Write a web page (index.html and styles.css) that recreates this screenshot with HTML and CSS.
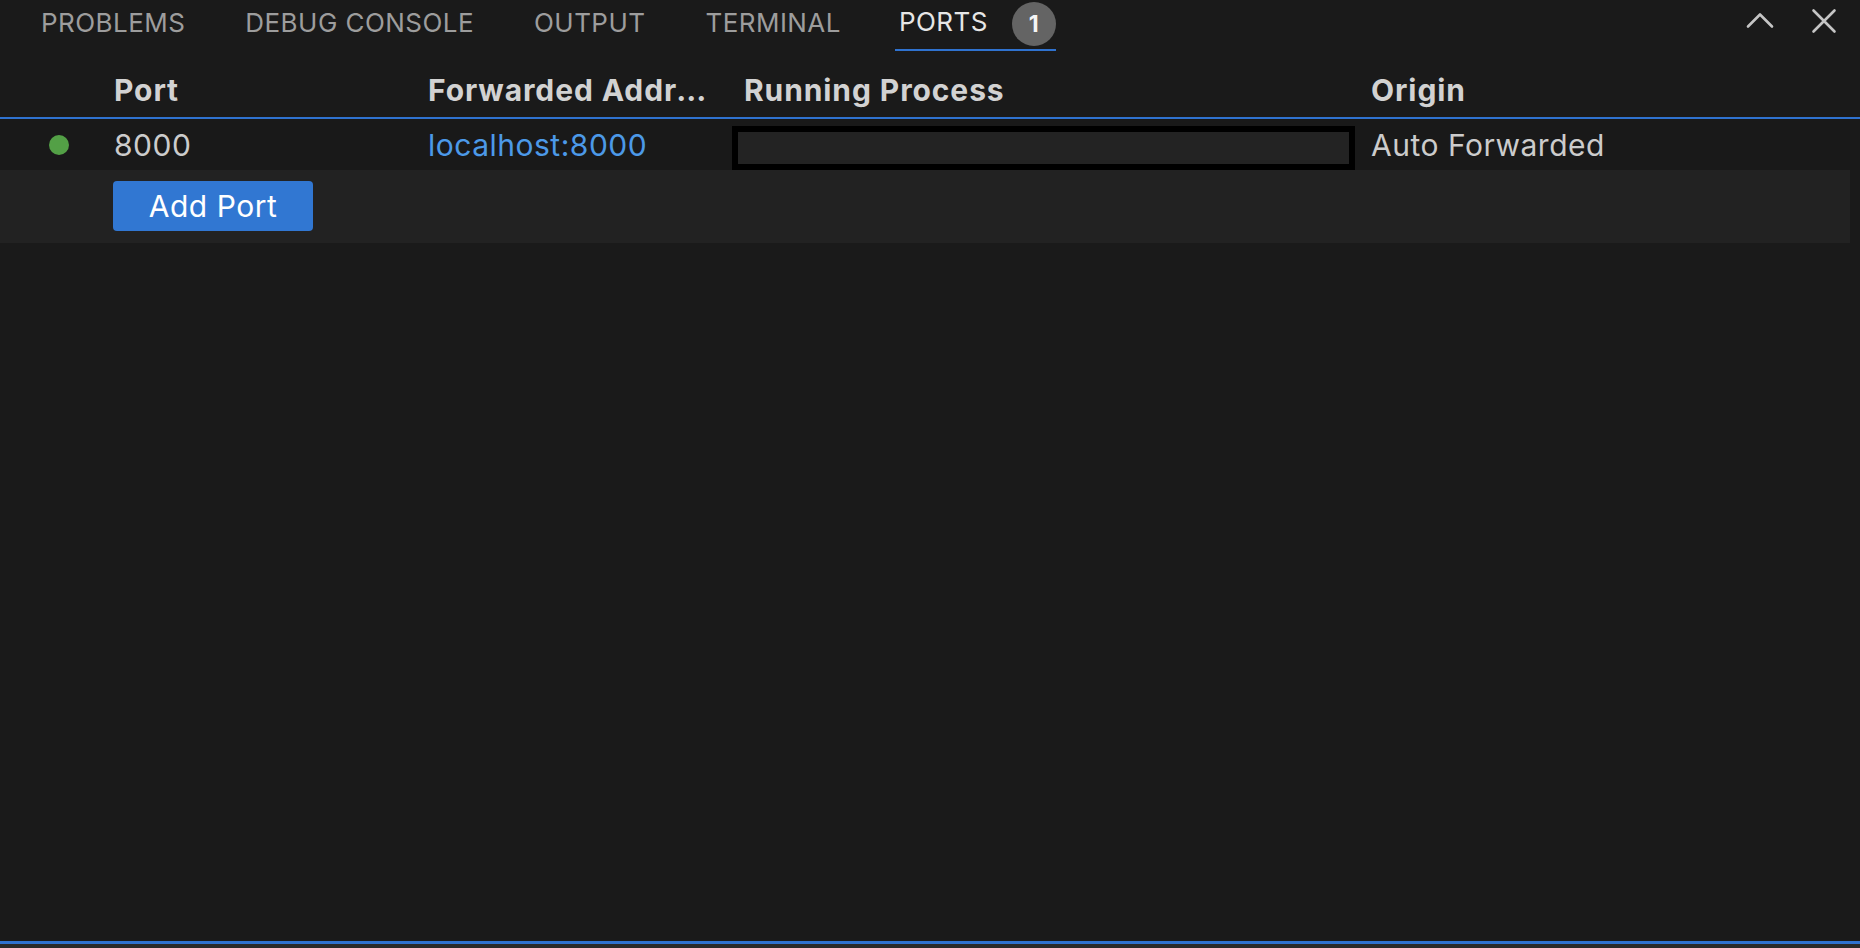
FILE: index.html
```html
<!DOCTYPE html>
<html lang="en">
<head>
<meta charset="utf-8">
<title>Ports</title>
<link rel="stylesheet" href="styles.css">
</head>
<body>
<div class="panel">
  <div class="titlebar">
    <div class="tabs">
      <div class="tab">PROBLEMS</div>
      <div class="tab">DEBUG CONSOLE</div>
      <div class="tab">OUTPUT</div>
      <div class="tab">TERMINAL</div>
      <div class="tab active">PORTS <span class="badge">1</span></div>
    </div>
    <div class="actions">
      <svg class="icon chevron" width="30" height="18" viewBox="0 0 30 18"><path d="M3 15.5 L15 3.5 L27 15.5" fill="none" stroke="#c5c5c5" stroke-width="2.6" stroke-linecap="round" stroke-linejoin="round"/></svg>
      <svg class="icon close" width="26" height="26" viewBox="0 0 26 26"><path d="M2.5 2.5 L23.5 23.5 M23.5 2.5 L2.5 23.5" fill="none" stroke="#c5c5c5" stroke-width="2.6" stroke-linecap="round"/></svg>
    </div>
  </div>
  <div class="view">
    <div class="thead grid">
      <div class="cell"></div>
      <div class="cell">Port</div>
      <div class="cell ellipsis">Forwarded Address</div>
      <div class="cell proc">Running Process</div>
      <div class="cell">Origin</div>
    </div>
    <div class="tbody">
      <div class="row grid">
        <div class="cell dotcell"><span class="dot"></span></div>
        <div class="cell">8000</div>
        <div class="cell link">localhost:8000</div>
        <div class="cell boxcell"><div class="redacted"></div></div>
        <div class="cell">Auto Forwarded</div>
      </div>
      <div class="addrow">
        <button class="btn">Add Port</button>
      </div>
    </div>
  </div>
  <div class="footer-strip"></div>
</div>
</body>
</html>
```
FILE: styles.css
```css
* { box-sizing: border-box; }
html, body {
  margin: 0;
  padding: 0;
  background: #1a1a1a;
}
body {
  font-family: Inter, "Liberation Sans", sans-serif;
  color: #cccccc;
  width: 1860px;
  height: 948px;
  overflow: hidden;
}
.panel {
  display: flex;
  flex-direction: column;
  height: 948px;
}
.titlebar {
  height: 52px;
  display: flex;
  align-items: flex-start;
  justify-content: space-between;
  padding-left: 35px;
  flex: none;
}
.tabs {
  display: flex;
  gap: 48px;
}
.tab {
  height: 50.5px;
  padding: 0 6px 6px 6px;
  display: flex;
  align-items: center;
  font-size: 26px;
  letter-spacing: 0.45px;
  color: #9d9d9d;
  white-space: pre;
}
.tab.active {
  color: #e6e6e6;
  padding-left: 4px;
  padding-right: 0;
  border-bottom: 2.5px solid #2f72cf;
}
.badge {
  display: inline-flex;
  align-items: center;
  justify-content: center;
  width: 44px;
  height: 44px;
  border-radius: 50%;
  background: #646464;
  color: #f5f5f5;
  font-size: 23px;
  font-weight: 700;
  letter-spacing: 0;
  margin-left: 16px;
  margin-top: 5px;
}
.actions {
  display: flex;
  align-items: center;
  gap: 36px;
  padding-right: 23px;
  height: 42px;
}
.icon { display: block; }
.chevron { margin-top: -2px; }
.view {
  flex: 1;
  display: flex;
  flex-direction: column;
  border-bottom: 3px solid #2f72cf;
}
.grid {
  display: grid;
  grid-template-columns: 104px 314px 314px 629px 1fr;
  align-items: center;
}
.cell {
  padding-left: 10px;
  white-space: nowrap;
  overflow: hidden;
}
.thead {
  height: 67px;
  padding-top: 11px;
  font-size: 30px;
  font-weight: 700;
  letter-spacing: 0.9px;
  color: #d2d2d2;
  border-bottom: 2px solid #2f72cf;
}
.thead .ellipsis {
  text-overflow: ellipsis;
  padding-right: 18px;
}
.thead .proc { padding-left: 12px; }
.tbody {
  flex: 1;
  padding-right: 10px;
}
.row {
  height: 51px;
  font-size: 30px;
  letter-spacing: 0.5px;
  color: #cccccc;
  background: #191919;
}
.dotcell {
  padding-left: 49px;
  display: flex;
  align-items: center;
}
.dot {
  width: 20px;
  height: 20px;
  border-radius: 50%;
  background: #53a046;
}
.link { color: #4c99e8; }
.boxcell {
  padding-left: 0;
  align-self: stretch;
  padding-top: 7px;
}
.redacted {
  width: 623px;
  height: 44px;
  border: 6px solid #000000;
  background: #232323;
}
.addrow {
  height: 73px;
  background: #222222;
  display: flex;
  align-items: center;
  padding-left: 113px;
  padding-bottom: 1px;
}
.btn {
  width: 200px;
  height: 50px;
  border: none;
  border-radius: 4px;
  background: #3177d2;
  color: #ffffff;
  font-family: Inter, "Liberation Sans", sans-serif;
  font-size: 30px;
  letter-spacing: 0.5px;
  padding: 0;
}
.footer-strip {
  height: 4px;
  background: #2a2a2a;
  flex: none;
}
```
